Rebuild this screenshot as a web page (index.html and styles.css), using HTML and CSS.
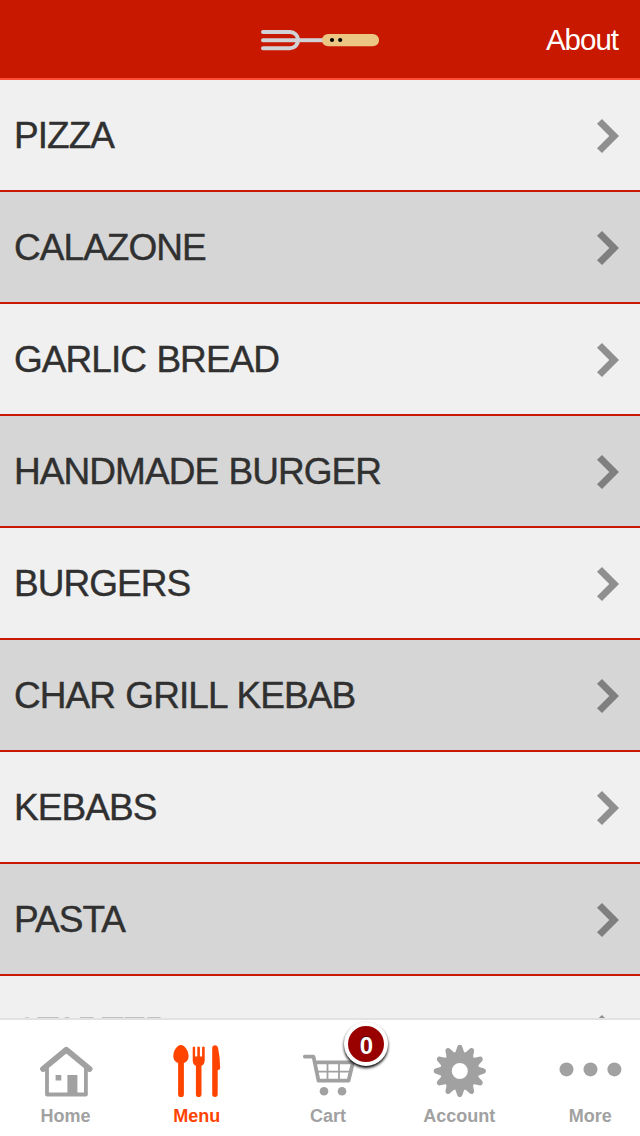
FILE: index.html
```html
<!DOCTYPE html>
<html lang="en">
<head>
    <meta charset="UTF-8"/>
    <title>Menu</title>
    <link rel="stylesheet" href="styles.css">
</head>
<body>
<header>
    <svg class="logo" width="120" height="24" viewBox="0 0 120 24">
        <g fill="none" stroke="#d0d2d6" stroke-width="4">
            <path d="M3 4H30A8.1 8.1 0 0 1 30 20.2H3M3 12.2H38" stroke-linecap="round"/>
            <path d="M36 12.2H64"/>
        </g>
        <rect x="62" y="6" width="57" height="12.3" rx="6.1" fill="#ecc783"/>
        <circle cx="72" cy="12" r="2.1"/>
        <circle cx="80.2" cy="12" r="2.1"/>
    </svg>
    <a href="#about">About</a>
</header>
<main>
    <ul class="categories">
        <li><span>PIZZA</span><svg class="arrow" viewBox="0 0 22 34"><path d="M5 0L22 17L5 34L0 29.3L12.3 17L0 4.7Z"/></svg></li>
        <li><span>CALAZONE</span><svg class="arrow" viewBox="0 0 22 34"><path d="M5 0L22 17L5 34L0 29.3L12.3 17L0 4.7Z"/></svg></li>
        <li><span>GARLIC BREAD</span><svg class="arrow" viewBox="0 0 22 34"><path d="M5 0L22 17L5 34L0 29.3L12.3 17L0 4.7Z"/></svg></li>
        <li><span>HANDMADE BURGER</span><svg class="arrow" viewBox="0 0 22 34"><path d="M5 0L22 17L5 34L0 29.3L12.3 17L0 4.7Z"/></svg></li>
        <li><span>BURGERS</span><svg class="arrow" viewBox="0 0 22 34"><path d="M5 0L22 17L5 34L0 29.3L12.3 17L0 4.7Z"/></svg></li>
        <li><span>CHAR GRILL KEBAB</span><svg class="arrow" viewBox="0 0 22 34"><path d="M5 0L22 17L5 34L0 29.3L12.3 17L0 4.7Z"/></svg></li>
        <li><span>KEBABS</span><svg class="arrow" viewBox="0 0 22 34"><path d="M5 0L22 17L5 34L0 29.3L12.3 17L0 4.7Z"/></svg></li>
        <li><span>PASTA</span><svg class="arrow" viewBox="0 0 22 34"><path d="M5 0L22 17L5 34L0 29.3L12.3 17L0 4.7Z"/></svg></li>
        <li><span>STARTER</span><svg class="arrow" viewBox="0 0 22 34"><path d="M5 0L22 17L5 34L0 29.3L12.3 17L0 4.7Z"/></svg></li>
    </ul>
</main>
<nav class="tabs">
    <a href="#home">
        <svg viewBox="0 1 56 56">
            <g fill="none" stroke="#a1a1a1">
                <path d="M5 26L28.3 6.7L51.6 26" stroke-width="5.8" stroke-linecap="round" stroke-linejoin="round"/>
                <path d="M9 24V51.5H47.9V24" stroke-width="3.8" stroke-linejoin="round"/>
            </g>
            <path d="M17.6 32h5.7v5.5h-5.7zM29.4 32h10v19.5h-10z"/>
        </svg>
        <span>Home</span>
    </a>
    <a href="#menu" class="active">
        <svg viewBox="0.6 1 56 56">
            <path d="M12.5 2C16.5 2 20.2 8 20.2 13.2C20.2 16.5 18.5 18.8 15.5 20V51.2a2.9 2.9 0 0 1-5.8 0V20C6.7 18.8 4.9 16.5 4.9 13.2C4.9 8 8.5 2 12.5 2Z"/>
            <path d="M24.3 4.3q1.2-1.6 2.4 0V13.5h2.2V4.3q1.3-1.6 2.6 0v9.2h2.2V4.3q1.3-1.6 2.6 0V17q0 4.5-3.2 5.7V51.2a2.8 2.8 0 0 1-5.6 0V22.7Q24.3 21.5 24.3 17Z"/>
            <path d="M43.8 5Q44 2.2 46.7 2.2Q49 2.2 49.8 5.5Q51.7 15 51.8 25Q51.7 27 49.3 27.2V51.2a2.75 2.75 0 0 1-5.5 0Z"/>
        </svg>
        <span>Menu</span>
    </a>
    <a href="#cart">
        <svg viewBox="0 1 56 56">
            <path d="M4.8 13.6H13.5L18.5 37.7H48.5L53 19.3H15" fill="none" stroke="#a1a1a1" stroke-width="3.8" stroke-linecap="round" stroke-linejoin="round"/>
            <path d="M16 28.6H51M27.5 20V37M39 20V37" fill="none" stroke="#a1a1a1" stroke-width="1.8"/>
            <circle cx="24" cy="48.3" r="4.3"/>
            <circle cx="42" cy="48.3" r="4.3"/>
        </svg>
        <b class="badge">0</b>
        <span>Cart</span>
    </a>
    <a href="#account">
        <svg viewBox="-28.8 -27 56 56">
            <circle r="13.5" fill="none" stroke="#a1a1a1" stroke-width="11"/>
            <g id="teeth">
                <path id="tooth" d="M-5.5-17Q-3.6-20-2.7-23.8Q-2.2-26.2 0-26.2T2.7-23.8Q3.6-20 5.5-17Z"/>
                <use href="#tooth" transform="rotate(30)"/>
                <use href="#tooth" transform="rotate(60)"/>
            </g>
            <use href="#teeth" transform="rotate(90)"/>
            <use href="#teeth" transform="rotate(180)"/>
            <use href="#teeth" transform="rotate(270)"/>
        </svg>
        <span>Account</span>
    </a>
    <a href="#more">
        <svg class="dots" viewBox="0 1 64 56">
            <circle cx="8.5" cy="26.4" r="7"/>
            <circle cx="32.5" cy="26.4" r="7"/>
            <circle cx="56.4" cy="26.4" r="7"/>
        </svg>
        <span>More</span>
    </a>
</nav>
</body>
</html>
```
FILE: styles.css
```css
* {
    box-sizing: border-box;
}

body {
    display: flex;
    flex-direction: column;
    height: 1136px;
    margin: 0;
    overflow: hidden;
    font-family: "Liberation Sans", Arial, sans-serif;
    background-color: #f0f0f0;
}

a {
    text-decoration: none;
}

header {
    display: flex;
    flex: none;
    align-items: center;
    justify-content: space-between;
    height: 80px;
    padding: 2px 22px 0 260px;
    background-color: #c91800;
    border-bottom: 2px solid #ff5037;
}

header a {
    color: white;
    font-size: 29.5px;
    letter-spacing: -1px;
}

main {
    flex: 1;
    min-height: 0;
    overflow: hidden;
}

.categories {
    margin: 0;
    padding: 0;
    list-style-type: none;
}

.categories li {
    display: flex;
    align-items: center;
    justify-content: space-between;
    height: 112px;
    padding: 2px 21px 0 14px;
    border-bottom: 2px solid #c91800;
    color: #303030;
    font-size: 37px;
    letter-spacing: -0.95px;
    word-spacing: 1px;
    -webkit-text-stroke: 0.4px #303030;
}

.categories li:nth-child(even) {
    background-color: #d6d6d6;
}

.categories li:last-child {
    letter-spacing: -2px;
}

.arrow {
    width: 22px;
    height: 34px;
    opacity: 0.4;
}

.tabs {
    display: flex;
    flex: none;
    height: 118px;
    border-top: 2px solid #e2e2e2;
    background-color: white;
}

.tabs a {
    position: relative;
    display: flex;
    flex: none;
    flex-direction: column;
    align-items: center;
    width: 131.2px;
    padding-top: 24px;
    color: #a1a1a1;
    font-size: 18px;
    font-weight: bold;
}

.tabs a.active {
    color: #ff4400;
}

.tabs svg {
    width: 56px;
    height: 56px;
    margin-bottom: 6px;
    fill: currentColor;
}

.tabs .dots {
    width: 64px;
}

.badge {
    position: absolute;
    top: 2px;
    left: 82px;
    width: 44px;
    height: 44px;
    border: 4px solid white;
    border-radius: 50%;
    background-color: #990000;
    box-shadow: 0 2px 3px #000;
    color: white;
    font-size: 24px;
    line-height: 39px;
    text-align: center;
    text-shadow: 0 -1px 1px #500;
}
```
